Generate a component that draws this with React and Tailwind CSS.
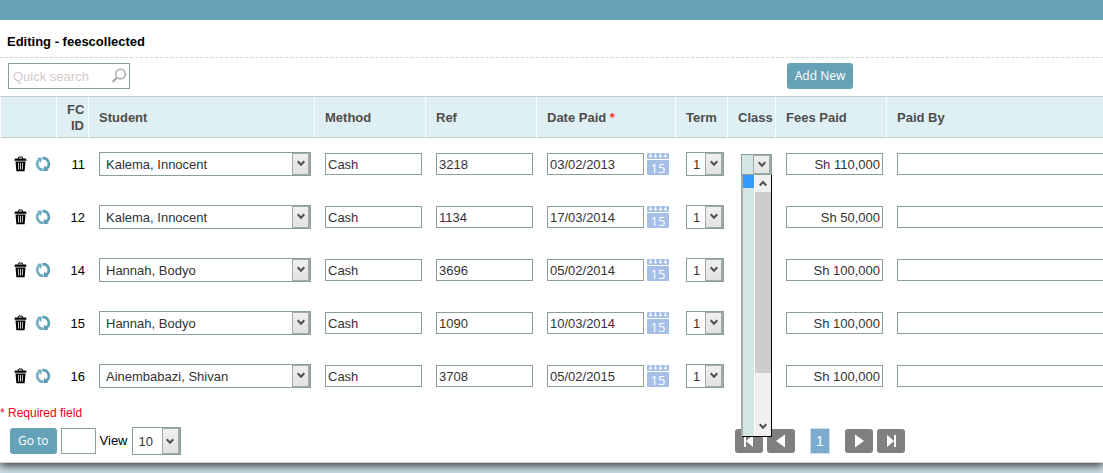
import { useState } from 'react'

const rows = [
  { id: 11, student: 'Kalema, Innocent', method: 'Cash', ref: '3218', date: '03/02/2013', term: '1', fees: 'Sh 110,000' },
  { id: 12, student: 'Kalema, Innocent', method: 'Cash', ref: '1134', date: '17/03/2014', term: '1', fees: 'Sh 50,000' },
  { id: 14, student: 'Hannah, Bodyo', method: 'Cash', ref: '3696', date: '05/02/2014', term: '1', fees: 'Sh 100,000' },
  { id: 15, student: 'Hannah, Bodyo', method: 'Cash', ref: '1090', date: '10/03/2014', term: '1', fees: 'Sh 100,000' },
  { id: 16, student: 'Ainembabazi, Shivan', method: 'Cash', ref: '3708', date: '05/02/2015', term: '1', fees: 'Sh 100,000' },
]

const students = ['Kalema, Innocent', 'Hannah, Bodyo', 'Ainembabazi, Shivan']

function Chevron({ up = false }) {
  return (
    <svg width="8" height="7" viewBox="0 0 8 7" fill="none" stroke="#505050" strokeWidth="2" aria-hidden="true">
      {up ? <path d="M0.7 5.5 L4 2 L7.3 5.5" /> : <path d="M0.7 1.3 L4 4.8 L7.3 1.3" />}
    </svg>
  )
}

function SelectBox({ label, options, value, className = '', tone = 'bg-white' }) {
  const [current, setCurrent] = useState(value)
  return (
    <div className={`relative border border-[#8b9f9a] ${tone} ${className}`}>
      <select
        aria-label={label}
        value={current}
        onChange={(e) => setCurrent(e.target.value)}
        className="block h-full w-full appearance-none bg-transparent pl-1.5 pr-4 pt-0.5 text-[#333] outline-none"
      >
        {options.map((o) => (
          <option key={o} value={o}>{o}</option>
        ))}
      </select>
      <span className="pointer-events-none absolute inset-y-0 right-0 flex w-[18px] items-center justify-center border border-r-2 border-[#a3a9a7] bg-linear-to-b from-[#f0f0f0] to-[#e2e2e2]">
        <Chevron />
      </span>
    </div>
  )
}

function TextBox({ label, value = '', className = '' }) {
  return (
    <input
      type="text"
      aria-label={label}
      defaultValue={value}
      className={`block h-[22px] border border-[#8b9f9a] bg-white px-0.5 pt-0.5 text-[#333] outline-none ${className}`}
    />
  )
}

function TrashIcon() {
  return (
    <svg width="13" height="16" viewBox="0 0 13 16" aria-hidden="true">
      <path d="M4.2 2.8 L4.8 1 H8.2 L8.8 2.8" fill="none" stroke="#000" strokeWidth="1" />
      <path d="M1 2.4 H12 L12.6 4.8 H0.4 Z" fill="#000" />
      <path d="M1.5 5.4 H11.5 L10.6 15.2 H2.4 Z" fill="#000" />
      <path d="M4.3 6.8 L4.7 13.6 M6.5 6.8 V13.6 M8.7 6.8 L8.3 13.6" stroke="#fff" strokeWidth="0.8" />
    </svg>
  )
}

function RefreshIcon() {
  return (
    <svg width="16" height="16" viewBox="0 0 16 16" fill="none" aria-hidden="true">
      <path d="M7.4 2.2 A5.8 5.8 0 0 1 11.2 12.8" stroke="#5b9db5" strokeWidth="2.6" />
      <path d="M8.4 13.2 L9.6 9.4 L13.4 14.8 L8.8 15.2 Z" fill="#5b9db5" />
      <path d="M8.2 13.8 A5.8 5.8 0 0 1 3.8 4" stroke="#74aec4" strokeWidth="2.6" />
      <path d="M6.9 3.4 L6 7 L2.2 2 L6 1.2 Z" fill="#74aec4" />
    </svg>
  )
}

function CalendarIcon() {
  return (
    <svg width="22" height="22" viewBox="0 0 22 22" className="overflow-visible" aria-hidden="true">
      <rect width="22" height="6" rx="1" fill="#a6bfe6" />
      <rect y="7" width="22" height="15" rx="1" fill="#a6bfe6" />
      <path d="M3.5 0 V3 M8.5 0 V3 M13.5 0 V3 M18.5 0 V3" stroke="#fff" strokeWidth="0.8" />
      <g fill="#fff">
        <circle cx="3.5" cy="3.2" r="1.2" />
        <circle cx="8.5" cy="3.2" r="1.2" />
        <circle cx="13.5" cy="3.2" r="1.2" />
        <circle cx="18.5" cy="3.2" r="1.2" />
      </g>
      <text x="11" y="20" textAnchor="middle" fontSize="13" fill="#fff" fontFamily="Open Sans, sans-serif">15</text>
    </svg>
  )
}

function ClassMenu() {
  return (
    <div className="absolute left-0 top-full z-10 flex h-[262px] w-[31px] border-b border-l-2 border-r border-b-black border-l-[#aaa] border-r-black bg-[#d3e6e3]">
      <div className="flex-1">
        <div className="h-[13px] bg-[#3399ff]" />
      </div>
      <div className="flex w-[17px] flex-col border-l border-white bg-[#f0f0f0]">
        <span className="flex h-[17px] items-center justify-center"><Chevron up /></span>
        <span className="h-[181px] bg-[#cdcdcd]" />
        <span className="flex flex-1 items-end justify-center pb-1.5"><Chevron /></span>
      </div>
    </div>
  )
}

function HeadCell({ children, className = '' }) {
  return (
    <th className={`h-[42px] border-y border-r border-y-[#c6cbca] border-r-[#f6fdfb] bg-[#dff0f4] pl-2.5 pt-0.5 text-left font-bold leading-4 text-[#4d4d4d] ${className}`}>
      {children}
    </th>
  )
}

function Cell({ children, className = 'pb-0.5 pl-2.5' }) {
  return <td className={`h-[53px] ${className}`}>{children}</td>
}

function PagerButton({ label, children }) {
  return (
    <button type="button" aria-label={label} className="flex h-6 w-7 items-center justify-center rounded-[3px] bg-[#808080]">
      <svg width="16" height="16" viewBox="0 0 16 16" fill="#fff" aria-hidden="true">{children}</svg>
    </button>
  )
}

export default function App() {
  return (
    <div className="min-h-screen overflow-hidden bg-[#cbdce5] font-['Liberation_Sans',Arial,sans-serif] text-[13px]">
      <div className="relative z-10 h-5 bg-[#65a2b8]" />
      <main className="border-b border-[#d0d4d4] bg-white shadow-[0_3px_8px_rgba(0,0,0,0.7)]">
        {/* the grid is wider than most windows, so it runs off to the right */}
        <div className="overflow-hidden">
          <div className="min-w-[1640px] pb-[7px]">
            <h1 className="border-b border-dashed border-[#d4d4d4] pb-[5px] pl-[7px] pt-3 font-bold leading-5 text-black">
              Editing - feescollected
            </h1>

            <div className="grid grid-cols-[1fr_auto_1fr] items-center pb-[7px] pt-[5px]">
              <div className="ml-2 flex h-[26px] w-[122px] items-center border border-[#8b9f9a] pr-0.5">
                <input
                  type="search"
                  aria-label="Quick search"
                  placeholder="Quick search"
                  className="min-w-0 flex-1 pl-1 pt-0.5 outline-none placeholder:text-[#d5c9c9]"
                />
                <svg width="16" height="16" viewBox="0 0 16 16" fill="none" stroke="#adadad" aria-hidden="true">
                  <circle cx="9.5" cy="6" r="4.8" strokeWidth="1.6" />
                  <path d="M6 9.6 L1.5 14" strokeWidth="2.4" />
                </svg>
              </div>
              <button type="button" className="h-[26px] rounded-[3px] bg-[#65a2b8] px-2 font-['Open_Sans',sans-serif] text-xs text-white">
                Add New
              </button>
            </div>

            <table className="w-full table-fixed border-separate border-spacing-0">
              <thead>
                <tr>
                  <HeadCell className="w-[57px] border-l border-l-white" />
                  <HeadCell className="w-8 pr-1 text-right">FC ID</HeadCell>
                  <HeadCell className="w-[226px]">Student</HeadCell>
                  <HeadCell className="w-[111px]">Method</HeadCell>
                  <HeadCell className="w-[111px]">Ref</HeadCell>
                  <HeadCell className="w-[139px]">Date Paid <span className="text-red-500">*</span></HeadCell>
                  <HeadCell className="w-[52px]">Term</HeadCell>
                  <HeadCell className="w-12">Class</HeadCell>
                  <HeadCell className="w-[111px]">Fees Paid</HeadCell>
                  <HeadCell>Paid By</HeadCell>
                </tr>
              </thead>
              <tbody>
                {rows.map((row, i) => (
                  <tr key={row.id}>
                    <Cell className="pb-0.5 pl-3.5">
                      <div className="flex items-center gap-2">
                        <button type="button" aria-label="Delete"><TrashIcon /></button>
                        <button type="button" aria-label="Refresh"><RefreshIcon /></button>
                      </div>
                    </Cell>
                    <Cell className="pr-1 text-right text-black">{row.id}</Cell>
                    <Cell>
                      <SelectBox label="Student" options={students} value={row.student} className="h-6 w-[212px]" />
                    </Cell>
                    <Cell><TextBox label="Method" value={row.method} className="w-[97px]" /></Cell>
                    <Cell><TextBox label="Ref" value={row.ref} className="w-[97px]" /></Cell>
                    <Cell>
                      <div className="flex items-center gap-[3px]">
                        <TextBox label="Date Paid" value={row.date} className="w-[97px]" />
                        <button type="button" aria-label="Pick date"><CalendarIcon /></button>
                      </div>
                    </Cell>
                    <Cell>
                      <SelectBox label="Term" options={['1', '2', '3']} value={row.term} className="h-6 w-[38px]" />
                    </Cell>
                    <Cell className="pl-[13px]">
                      <div className="relative w-[31px]">
                        <SelectBox label="Class" options={['']} value="" tone="bg-[#d3e6e3]" className="h-[21px]" />
                        {i === 0 && <ClassMenu />}
                      </div>
                    </Cell>
                    <Cell><TextBox label="Fees Paid" value={row.fees} className="w-[97px] text-right" /></Cell>
                    <Cell><TextBox label="Paid By" className="w-80" /></Cell>
                  </tr>
                ))}
              </tbody>
            </table>

            <p className="text-xs leading-5 text-[#f00020]">* Required field</p>

            <div className="grid grid-cols-[1fr_auto_1fr] items-center pt-1">
              <div className="flex items-center pl-2.5 text-black">
                <button type="button" className="h-[26px] rounded-[3px] bg-[#65a2b8] px-2 font-['Open_Sans',sans-serif] text-xs text-white">
                  Go to
                </button>
                <TextBox label="Go to page" className="ml-1 h-[26px] w-[35px]" />
                <span className="mx-1">View</span>
                <SelectBox label="View" options={['10', '20', '50']} value="10" className="h-7 w-[49px]" />
              </div>
              <nav className="flex items-center gap-1">
                <PagerButton label="First page"><path d="M3 2 H5 V14 H3 Z M12 2 V14 L5 8 Z" /></PagerButton>
                <PagerButton label="Previous page"><path d="M12 1.5 V14.5 L3 8 Z" /></PagerButton>
                <a href="#1" className="mx-[11px] flex h-[26px] w-5 items-center justify-center border border-[#c9dcea] bg-[#7baccd] text-sm text-white">1</a>
                <PagerButton label="Next page"><path d="M4 1.5 V14.5 L13 8 Z" /></PagerButton>
                <PagerButton label="Last page"><path d="M11 2 H13 V14 H11 Z M4 2 V14 L11 8 Z" /></PagerButton>
              </nav>
            </div>
          </div>
        </div>
      </main>
    </div>
  )
}
